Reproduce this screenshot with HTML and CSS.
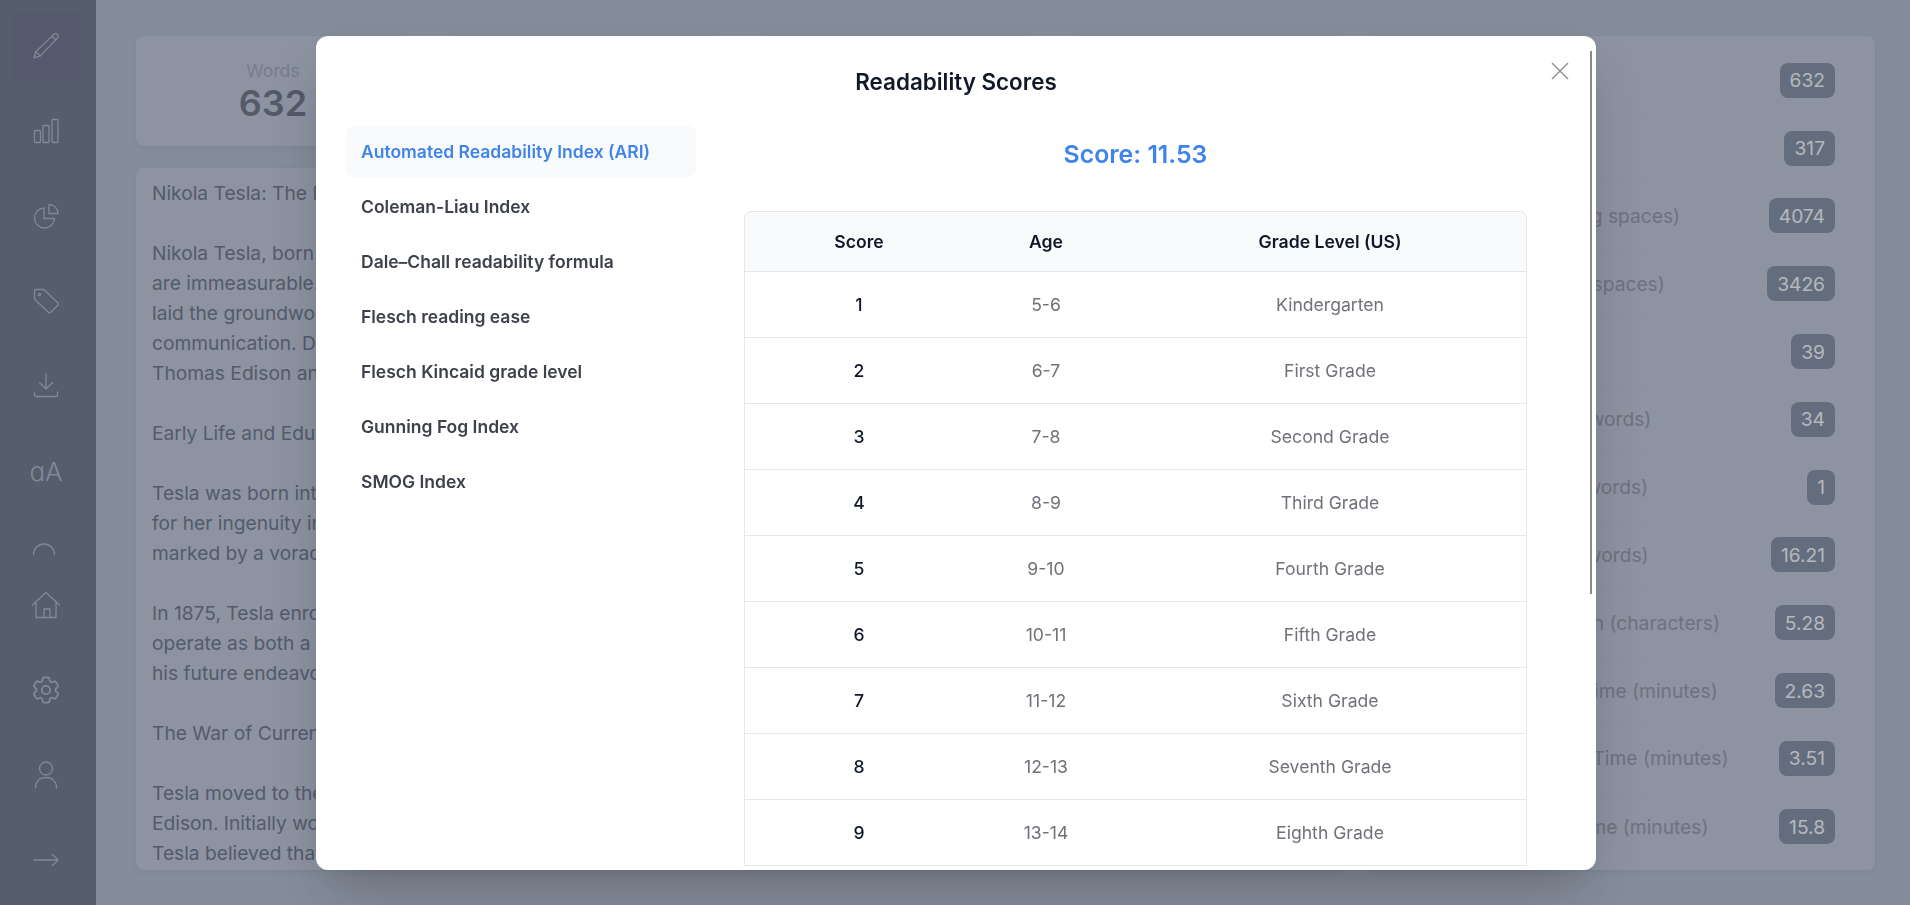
FILE: index.html
```html
<!DOCTYPE html>
<html lang="en">

<head>
	<meta charset="UTF-8">
	<meta name="viewport" content="width=device-width, initial-scale=1.0">
	<title>Word Counter</title>
	<link rel="stylesheet" href="styles.css">
</head>

<body>
	<div class="app">
		<aside class="sidebar">
			<nav class="nav-top">
				<a class="nav-item active">
					<svg class="icon" viewBox="0 0 28 28"><path d="M2 26 3.800 19.600 21.500 2.600a2.600 2.600 0 0 1 3.800 3.800L8.300 23.900Z" /><path d="M3.800 19.600l4.500 4.300M20 4.200l3.800 3.800" /></svg>
				</a>
				<a class="nav-item">
					<svg class="icon" viewBox="0 0 28 28"><rect x="2.500" y="13.500" width="6" height="12" rx="1" /><rect x="11" y="8.500" width="6" height="17" rx="1" /><rect x="20" y="2.500" width="6" height="23" rx="1" /></svg>
				</a>
				<a class="nav-item">
					<svg class="icon" viewBox="0 0 28 28"><path d="M12 6A10 10 0 1 0 22.500 16.500H12Z" /><path d="M17 2.500A9 9 0 0 1 26 11.500H17Z" /></svg>
				</a>
				<a class="nav-item">
					<svg class="icon" viewBox="0 0 28 28"><path d="M3.500 2.500H12L26 16a1.500 1.500 0 0 1 0 2l-7.500 7.500a1.500 1.500 0 0 1-2 0L2.500 12V3.500a1 1 0 0 1 1-1Z" /><circle cx="7.500" cy="7.500" r="1" /></svg>
				</a>
				<a class="nav-item">
					<svg class="icon" viewBox="0 0 28 28"><path d="M14 2V17M7.500 10.500 14 17l6.500-6.500M2.500 20v2.500a2 2 0 0 0 2 2h19a2 2 0 0 0 2-2V20" /></svg>
				</a>
				<a class="nav-item nav-text">aA</a>
				<a class="nav-item">
					<svg class="icon" viewBox="0 0 28 28"><path d="M1.500 12.500A10.500 10.500 0 0 1 22.500 12.500" /></svg>
				</a>
			</nav>
			<nav class="nav-bottom">
				<a class="nav-item">
					<svg class="icon" viewBox="0 0 28 28"><path d="M.5 14 14 1.500 27.500 14M4 11V26.500H24V11M12 26.500V18H18V26.500" /></svg>
				</a>
				<a class="nav-item">
					<svg class="icon" viewBox="2 2 20 20" stroke-width="0.9"><path d="M9.594 3.940c.09-.542.56-.94 1.110-.94h2.593c.55 0 1.020.398 1.110.94l.213 1.281c.063.374.313.686.645.87.074.04.147.083.22.127.325.196.72.257 1.075.124l1.217-.456a1.125 1.125 0 0 1 1.370.49l1.296 2.247a1.125 1.125 0 0 1-.26 1.431l-1.003.827c-.293.241-.438.613-.43.992a7.723 7.723 0 0 1 0 .255c-.008.378.137.75.43.991l1.004.827c.424.35.534.955.26 1.430l-1.298 2.247a1.125 1.125 0 0 1-1.369.491l-1.217-.456c-.355-.133-.75-.072-1.076.124a6.470 6.470 0 0 1-.22.128c-.331.183-.581.495-.644.869l-.213 1.281c-.09.543-.56.94-1.110.94h-2.594c-.55 0-1.019-.398-1.110-.94l-.213-1.281c-.062-.374-.312-.686-.644-.87a6.520 6.520 0 0 1-.22-.127c-.325-.196-.72-.257-1.076-.124l-1.217.456a1.125 1.125 0 0 1-1.369-.49l-1.297-2.247a1.125 1.125 0 0 1 .26-1.431l1.004-.827c.292-.24.437-.613.43-.991a6.932 6.932 0 0 1 0-.255c.007-.38-.138-.751-.43-.992l-1.004-.827a1.125 1.125 0 0 1-.26-1.430l1.297-2.247a1.125 1.125 0 0 1 1.370-.491l1.216.456c.356.133.751.072 1.076-.124.072-.044.146-.086.22-.128.332-.183.582-.495.644-.869l.214-1.280Z" /><path d="M15 12a3 3 0 1 1-6 0 3 3 0 0 1 6 0Z" /></svg>
				</a>
				<a class="nav-item">
					<svg class="icon" viewBox="0 0 28 28"><circle cx="14" cy="7.500" r="6.500" /><path d="M3.500 27C3.500 20 8 16.500 14 16.500S24.500 20 24.500 27" /></svg>
				</a>
				<a class="nav-item">
					<svg class="icon" viewBox="0 0 28 28"><path d="M2 14H26M20.500 8.500 26 14l-5.500 5.500" /></svg>
				</a>
			</nav>
		</aside>

		<main class="main">
			<section class="left-col">
				<div class="summary">
					<div class="summary-box">
						<span class="summary-label">Words</span>
						<span class="summary-value">632</span>
					</div>
					<div class="summary-box">
						<span class="summary-label">Characters</span>
						<span class="summary-value">4074</span>
					</div>
					<div class="summary-box">
						<span class="summary-label">Sentences</span>
						<span class="summary-value">39</span>
					</div>
					<div class="summary-box">
						<span class="summary-label">Reading Time</span>
						<span class="summary-value">2.63</span>
					</div>
				</div>
				<div class="editor">
					<p>Nikola Tesla: The Man Who Lit Up the World</p>
					<p>Nikola Tesla, born on July 10, 1856, in what is now Croatia, was an inventor whose contributions to science<br>
						are immeasurable. His work on alternating current, wireless power and electric motors changed daily life and<br>
						laid the groundwork for much of the technology that followed, from the power grid to modern radio<br>
						communication. Despite his brilliance he died nearly penniless, and his famous rivalry with<br>
						Thomas Edison and others has come to overshadow the quiet work of his later years.</p>
					<p>Early Life and Education</p>
					<p>Tesla was born into a Serbian family in the village of Smiljan. His mother, Djuka Mandic, was well known<br>
						for her ingenuity in making household tools, and he later credited her with his own gift for invention. His youth was<br>
						marked by a voracious appetite for reading and by an unusual memory for images and detail.</p>
					<p>In 1875, Tesla enrolled at the Polytechnic in Graz, where he first began to wonder whether a motor could<br>
						operate as both a motor and a dynamo without a commutator. The question would stay with him and shape<br>
						his future endeavors in electrical engineering for many years to come.</p>
					<p>The War of Currents</p>
					<p>Tesla moved to the United States in 1884 with little more than a letter of introduction to Thomas<br>
						Edison. Initially working for Edison, he set about improving the direct current generators of the company.<br>
						Tesla believed that alternating current was the better system, and the two soon parted ways over it.</p>
				</div>
			</section>

			<section class="stats">
				<div class="stat-row"><span class="stat-label">Words</span><span class="badge">632</span></div>
				<div class="stat-row"><span class="stat-label">Unique Words</span><span class="badge">317</span></div>
				<div class="stat-row"><span class="stat-label">Characters (including spaces)</span><span class="badge">4074</span></div>
				<div class="stat-row"><span class="stat-label">Characters (without spaces)</span><span class="badge">3426</span></div>
				<div class="stat-row"><span class="stat-label">Sentences</span><span class="badge">39</span></div>
				<div class="stat-row"><span class="stat-label">Shorter Sentences (words)</span><span class="badge">34</span></div>
				<div class="stat-row"><span class="stat-label">Longer Sentences (words)</span><span class="badge">1</span></div>
				<div class="stat-row"><span class="stat-label">Average Sentence (words)</span><span class="badge">16.21</span></div>
				<div class="stat-row"><span class="stat-label">Average Word Length (characters)</span><span class="badge">5.28</span></div>
				<div class="stat-row"><span class="stat-label">Estimated Reading Time (minutes)</span><span class="badge">2.63</span></div>
				<div class="stat-row"><span class="stat-label">Estimated Speaking Time (minutes)</span><span class="badge">3.51</span></div>
				<div class="stat-row"><span class="stat-label">Estimated Writing Time (minutes)</span><span class="badge">15.8</span></div>
			</section>
		</main>
	</div>

	<div class="overlay">
		<div class="modal">
			<button class="modal-close" aria-label="Close">
				<svg viewBox="0 0 18 18"><path d="M1 1 17 17M17 1 1 17" /></svg>
			</button>
			<div class="modal-scrollbar"></div>
			<h2 class="modal-title">Readability Scores</h2>
			<div class="modal-body">
				<ul class="tabs">
					<li class="tab active">Automated Readability Index (ARI)</li>
					<li class="tab">Coleman-Liau Index</li>
					<li class="tab">Dale–Chall readability formula</li>
					<li class="tab">Flesch reading ease</li>
					<li class="tab">Flesch Kincaid grade level</li>
					<li class="tab">Gunning Fog Index</li>
					<li class="tab">SMOG Index</li>
				</ul>
				<div class="panel">
					<div class="score">Score: 11.53</div>
					<div class="table-wrap">
						<table>
							<thead>
								<tr>
									<th>Score</th>
									<th>Age</th>
									<th>Grade Level (US)</th>
								</tr>
							</thead>
							<tbody>
								<tr><td>1</td><td>5-6</td><td>Kindergarten</td></tr>
								<tr><td>2</td><td>6-7</td><td>First Grade</td></tr>
								<tr><td>3</td><td>7-8</td><td>Second Grade</td></tr>
								<tr><td>4</td><td>8-9</td><td>Third Grade</td></tr>
								<tr><td>5</td><td>9-10</td><td>Fourth Grade</td></tr>
								<tr><td>6</td><td>10-11</td><td>Fifth Grade</td></tr>
								<tr><td>7</td><td>11-12</td><td>Sixth Grade</td></tr>
								<tr><td>8</td><td>12-13</td><td>Seventh Grade</td></tr>
								<tr><td>9</td><td>13-14</td><td>Eighth Grade</td></tr>
							</tbody>
						</table>
					</div>
				</div>
			</div>
		</div>
	</div>
</body>

</html>
```

FILE: styles.css
```css
* {
	box-sizing: border-box;
}

html,
body {
	margin: 0;
	height: 100%;
	overflow: hidden;
	font-family: 'Inter', sans-serif;
}

.app {
	display: flex;
	height: 905px;
	background: #b8bfcc;
}

/* sidebar */
.sidebar {
	width: 96px;
	flex-shrink: 0;
	display: flex;
	flex-direction: column;
	padding: 12px 16px 11px 12px;
	background: #747b8b;
}

.nav-top {
	flex: 1;
	min-height: 0;
	overflow: hidden;
	margin-bottom: 16px;
}

.nav-top,
.nav-bottom {
	display: flex;
	flex-direction: column;
	gap: 17px;
}

.nav-item {
	width: 68px;
	height: 68px;
	flex-shrink: 0;
	display: flex;
	align-items: center;
	justify-content: center;
	border-radius: 8px;
	color: #b4bac6;
}

.nav-item.active {
	background: #717888;
}

.nav-text {
	font-size: 26px;
	font-weight: 300;
	font-feature-settings: 'cv11';
}

.icon {
	width: 28px;
	height: 28px;
	fill: none;
	stroke: currentColor;
	stroke-width: 1.3;
	stroke-linecap: round;
	stroke-linejoin: round;
}

/* page behind the dialog */
.main {
	flex: 1;
	min-width: 0;
	display: flex;
	gap: 24px;
	padding: 36px 35px 35px 40px;
}

.left-col {
	flex: 1;
	min-width: 0;
	display: flex;
	flex-direction: column;
	gap: 22px;
}

.summary {
	display: flex;
	justify-content: space-between;
}

.summary-box {
	width: 274px;
	height: 110px;
	display: flex;
	flex-direction: column;
	align-items: center;
	justify-content: center;
	background: #c3c9d6;
	border-radius: 8px;
	box-shadow: 0 2px 6px rgba(0, 0, 0, 0.06);
}

.summary-label {
	font-size: 17.600px;
	line-height: 24px;
	color: #a4aaba;
}

.summary-value {
	font-size: 36px;
	line-height: 40px;
	font-weight: 600;
	color: #707785;
}

.editor {
	flex: 1;
	min-height: 0;
	overflow: hidden;
	padding: 10px 16px;
	background: #c3c9d6;
	border-radius: 8px;
	box-shadow: 0 2px 6px rgba(0, 0, 0, 0.06);
	font-size: 19.200px;
	line-height: 30px;
	color: #727989;
	white-space: nowrap;
}

.editor p {
	margin: 0 0 30px;
}

.stats {
	width: 507px;
	flex-shrink: 0;
	padding: 11px 40px 0;
	background: #c3c9d6;
	border-radius: 8px;
	box-shadow: 0 2px 6px rgba(0, 0, 0, 0.06);
}

.stat-row {
	height: 67.800px;
	display: flex;
	align-items: center;
	justify-content: space-between;
	border-bottom: 1px solid #c0c6d3;
}

.stat-row:last-child {
	border-bottom: none;
}

.stat-label {
	font-size: 19.200px;
	color: #969aa8;
	white-space: nowrap;
}

.badge {
	height: 35px;
	padding: 0 10px;
	display: flex;
	align-items: center;
	background: #8992a3;
	border-radius: 8px;
	font-size: 19.200px;
	color: #fafcff;
}

/* readability dialog */
.overlay {
	position: fixed;
	inset: 0;
	display: flex;
	justify-content: center;
	padding: 36px 0 35px 2px;
	background: rgba(17, 24, 39, 0.3);
}

.modal {
	position: relative;
	width: 1280px;
	overflow: hidden;
	background: white;
	border-radius: 12px;
	box-shadow: 0 25px 50px -12px rgba(0, 0, 0, 0.25);
}

.modal-close {
	position: absolute;
	top: 26px;
	right: 27px;
	width: 18px;
	height: 18px;
	padding: 0;
	border: none;
	background: transparent;
}

.modal-close svg {
	display: block;
	fill: none;
	stroke: #8f9196;
	stroke-width: 1.5;
}

.modal-scrollbar {
	position: absolute;
	top: 15px;
	right: 4px;
	width: 2px;
	height: 543px;
	background: #8a8a8a;
}

.modal-title {
	margin: 0;
	padding: 30px 0 28px;
	font-size: 22.400px;
	line-height: 32px;
	font-weight: 600;
	text-align: center;
	color: #111827;
}

.modal-body {
	display: flex;
	gap: 48px;
	padding-left: 30px;
}

.tabs {
	width: 350px;
	flex-shrink: 0;
	margin: 0;
	padding: 0;
	list-style: none;
	display: flex;
	flex-direction: column;
	gap: 4px;
}

.tab {
	height: 51px;
	display: flex;
	align-items: center;
	padding: 0 15px;
	border-radius: 8px;
	font-size: 17.500px;
	font-weight: 600;
	color: #3d4149;
}

.tab.active {
	background: #f9fafb;
	color: #3f84ea;
}

.panel {
	width: 783px;
	flex-shrink: 0;
}

.score {
	padding-top: 12px;
	margin-bottom: 41px;
	font-size: 24.800px;
	line-height: 32px;
	font-weight: 600;
	text-align: center;
	color: #3f84ea;
}

.table-wrap {
	border: 1px solid #e5e7eb;
	border-bottom: none;
	border-radius: 8px 8px 0 0;
	overflow: hidden;
}

table {
	width: 100%;
	border-collapse: collapse;
	table-layout: fixed;
	font-size: 17.600px;
	text-align: center;
}

th:nth-child(1),
td:nth-child(1) {
	width: 228px;
}

th:nth-child(2),
td:nth-child(2) {
	width: 146px;
}

th:nth-child(3),
td:nth-child(3) {
	padding-left: 16px;
}

thead tr {
	height: 59px;
	background: #f9fafb;
}

th {
	font-weight: 600;
	color: #111827;
}

tbody tr {
	height: 66.100px;
	border-top: 1px solid #e5e7eb;
}

tbody tr:last-child {
	border-bottom: 1px solid #e5e7eb;
}

td {
	color: #6f7278;
}

td:first-child {
	font-weight: 500;
	color: #111827;
}
```
